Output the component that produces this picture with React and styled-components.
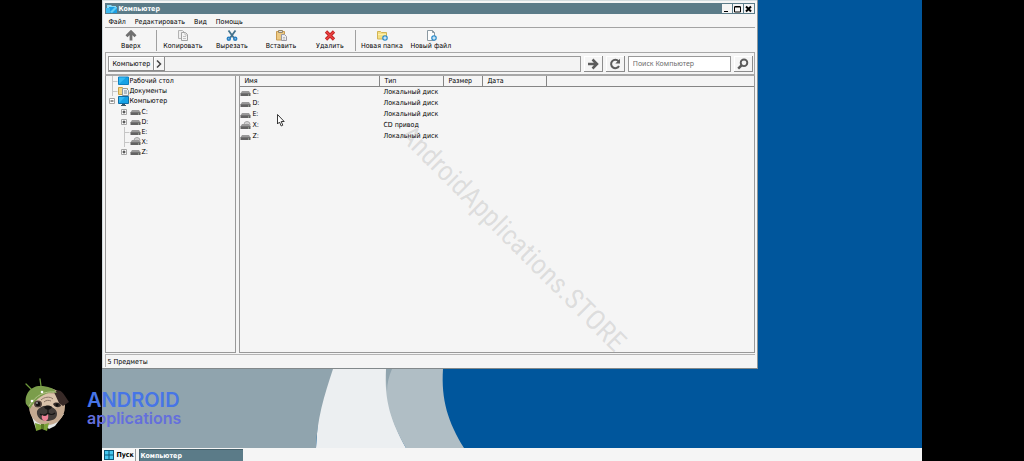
import React from 'react';
import styled, { createGlobalStyle, css } from 'styled-components';

const GlobalStyle = createGlobalStyle`
  * { box-sizing: border-box; }
  body {
    margin: 0;
    background: #000;
    color: #000;
    font-family: "DejaVu Sans Condensed", "DejaVu Sans", sans-serif;
    font-size: 7px;
    line-height: 10px;
  }
  button, input { font: inherit; color: inherit; margin: 0; padding: 0; border-radius: 0; }
  ul { list-style: none; margin: 0; padding: 0; }
  svg { display: block; flex: none; }
`;

const Screen = styled.div`
  position: relative;
  min-height: 100vh;
  padding: 0 10%;
  display: flex;
  overflow: hidden;
`;

const Desktop = styled.div`
  flex: 1;
  min-width: 0;
  display: flex;
  flex-direction: column;
  background: #00569c;
`;

const Workspace = styled.main`
  position: relative;
  flex: 1;
  display: flex;
  padding: 0 20% 79px 0;
`;

const Wallpaper = styled.svg`
  position: absolute;
  inset: 0;
  width: 100%;
  height: 100%;
`;

const Window = styled.section`
  position: relative;
  flex: 1;
  min-width: 0;
  display: flex;
  flex-direction: column;
  padding: 3px 2px 1px 3px;
  background: #f5f5f5;
  border-right: 1px solid #8b979c;
  border-bottom: 1px solid #83898b;
  box-shadow: inset 1px 1px 0 #d3dcdf;
`;

const TitleBar = styled.header`
  display: flex;
  align-items: center;
  gap: 1px;
  height: 11px;
  padding: 0 1px;
  background: #5b7b88;
  color: #fff;
`;

const Title = styled.h1`
  flex: 1;
  margin: 0;
  font-size: 7px;
  line-height: 10px;
  font-weight: 700;
`;

const Captions = styled.div`
  display: flex;
  gap: 1px;
`;

const CaptionButton = styled.button`
  display: grid;
  place-items: center;
  width: 10px;
  height: 9px;
  border: 0;
  background: #f5f5f5;
  color: #000;
`;

const MenuBar = styled.nav`
  display: flex;
  gap: 9px;
  height: 14px;
  padding: 3px 3px 0;
  border-bottom: 1px solid #a3a3a3;
`;

const MenuItem = styled.button`
  border: 0;
  background: none;
  line-height: 10px;
`;

const Toolbar = styled.div`
  display: flex;
  height: 24px;
  padding: 2px 0 1px 1px;
`;

const Tool = styled.button`
  display: flex;
  flex-direction: column;
  align-items: center;
  width: 49px;
  border: 0;
  background: none;
  white-space: nowrap;
`;

const ToolDivider = styled.div`
  width: 2px;
  margin-left: 1px;
  border-left: 1px solid #a0a0a0;
`;

const AddressBar = styled.div`
  display: flex;
  gap: 3px;
  height: 24px;
  padding: 3px 1px 2px 2px;
  border: solid #a8a8a8;
  border-width: 1px 1px 2px;
`;

const Path = styled.div`
  flex: 1;
  display: flex;
  border: 1px solid #999;
  background: #f3f3f3;
`;

const raised = css`
  border: solid #8c8c8c;
  border-width: 0 1px 1px 0;
  background: #f5f5f5;
  box-shadow: inset 1px 1px 0 #fff;
`;

const Crumb = styled.button`
  ${raised}
  display: grid;
  place-items: center;
  padding: 0 ${p => (p.$arrow ? 2 : 3)}px;
`;

const SquareButton = styled.button`
  ${raised}
  display: grid;
  place-items: center;
  width: 19px;
  color: #5c5c5c;
`;

const SearchForm = styled.form`
  display: flex;
  gap: 3px;
`;

const SearchInput = styled.input`
  width: 103px;
  padding: 0 4px;
  border: 1px solid #999;
  background: #fff;
  font-family: "Noto Sans", sans-serif;
  &::placeholder { color: #6d6d6d; opacity: 1; }
`;

const Panes = styled.div`
  flex: 1;
  display: flex;
  gap: 3px;
`;

const Pane = styled.div`
  border: 1px solid #999;
  border-top: 0;
  background: #f5f5f5;
  ${p => (p.$side ? 'width: 131px;' : 'flex: 1;')}
`;

const TreeList = styled.ul`
  ${p => (p.$nested ? 'margin: 1px 0 0 12px;' : 'padding: 0 0 0 3px;')}
`;

const Node = styled.div`
  display: flex;
  align-items: center;
  height: 10px;
  white-space: nowrap;
`;

const Twig = styled.span`
  display: flex;
  width: 9px;
`;

const Listing = styled.table`
  width: 100%;
  border-collapse: separate;
  border-spacing: 0;
  table-layout: fixed;
`;

const HeadCell = styled.th`
  width: ${p => (p.$width ? `${p.$width}px` : 'auto')};
  height: 11px;
  padding: 0 4px;
  border: solid #858585;
  border-width: 0 ${p => (p.$width ? 1 : 0)}px 1px 0;
  font-weight: 400;
  line-height: 10px;
  text-align: left;
`;

const Cell = styled.td`
  height: 11px;
  padding: 0 0 0 ${p => (p.$first ? 0 : 3)}px;
  line-height: 11px;
  white-space: nowrap;
`;

const FileName = styled.span`
  display: flex;
  align-items: center;
  gap: 1px;
`;

const StatusBar = styled.footer`
  height: 13px;
  margin-top: 1px;
  padding: 2px 1px 0;
  border-top: 1px solid #b4b4b4;
  border-left: 1px solid #b4b4b4;
`;

const Taskbar = styled.footer`
  position: relative;
  display: flex;
  gap: 3px;
  height: 13px;
  padding: 1px 2px 0;
  background: #f5f5f5;
  font-weight: 700;
`;

const StartButton = styled.button`
  display: flex;
  align-items: center;
  gap: 2px;
  width: 32px;
  border: 0;
  border-right: 1px solid #999;
  background: #f8f8f8;
`;

const Task = styled.button`
  width: 104px;
  padding: 0;
  border: solid #45606b;
  border-width: 1px 0 0 1px;
  background: #5b7b88;
  color: #fff;
  text-align: left;
`;

const Watermark = styled.div`
  position: absolute;
  left: 416px;
  top: 119px;
  transform: rotate(45deg);
  transform-origin: 0 0;
  color: rgba(120, 120, 120, 0.2);
  font: 400 28px/32px "Roboto Condensed", "Liberation Sans Narrow", sans-serif;
  white-space: nowrap;
  pointer-events: none;
`;

const Pointer = styled.svg`
  position: absolute;
  left: 277px;
  top: 114px;
  pointer-events: none;
`;

const Brand = styled.div`
  position: absolute;
  left: 22px;
  bottom: 28px;
  display: flex;
  align-items: center;
  gap: 17px;
  pointer-events: none;
`;

const BrandText = styled.div`
  display: flex;
  flex-direction: column;
  padding-top: 5px;
  font-family: Inter, sans-serif;
  font-weight: 600;
`;

const BrandName = styled.span`
  color: #4775e6;
  font-size: 20px;
  line-height: 20px;
`;

const BrandSub = styled.span`
  color: #646fdc;
  font-size: 16px;
  line-height: 16px;
`;

const Monitor = () => (
  <svg width="11" height="10" viewBox="0 0 11 10">
    <path d="M.5.5h10v7H.5z" fill="#16a2e6" stroke="#0d6ca5" />
    <path d="M1 7 7 1H1z" fill="#35baf3" />
    <path d="M4 8h3v1h1v1H3V9h1z" fill="#3c5868" />
  </svg>
);

const DesktopIcon = () => (
  <svg width="11" height="10" viewBox="0 0 11 10">
    <path d="M.5 1h10v7.500H.5z" fill="#16a2e6" stroke="#0d7fc0" />
    <path d="M1 8 8 1.500H1z" fill="#35baf3" />
  </svg>
);

const ComputerTitleIcon = () => (
  <svg width="11" height="10" viewBox="0 0 11 10">
    <path d="M1 1h4l1 1h4v4H1z" fill="#8adcf8" />
    <path d="M3 3h8v6H3z" fill="#1c9ee2" />
    <path d="M0 4h4v5H0z" fill="#3cb8ee" />
    <path d="M4 8 9 3h2v1L6 9z" fill="#63cdf5" />
  </svg>
);

const Documents = () => (
  <svg width="11" height="10" viewBox="0 0 11 10">
    <path d="M.5 1.500h4l1 1h4v6h-9z" fill="#f2d684" stroke="#c8a34a" />
    <path d="M4.500 2.500h4l2 2v5h-6z" fill="#eef1f3" stroke="#8e999f" />
    <path d="M6 5h3M6 7h3" stroke="#758995" />
  </svg>
);

const Drive = ({ cd }) => (
  <svg width="11" height="10" viewBox="0 0 11 10">
    {cd && <circle cx="7" cy="3.500" r="3" fill="#d6d6d6" stroke="#a5a5a5" />}
    {cd && <circle cx="7" cy="3.500" r="1" fill="#f8f8f8" stroke="#aaa" strokeWidth=".5" />}
    <path d="M2 3h7l1.500 2.500H.5z" fill="#999" />
    <path d="M.5 5h10v3H.5z" fill="#626262" />
    <path d="M1 5.500h9" stroke="#7d7d7d" strokeWidth=".7" />
    <path d="M8 7h1" stroke="#b4c6b1" />
  </svg>
);

const Expander = ({ open }) => (
  <svg width="6" height="7" viewBox="0 0 6 7">
    <path d="M.5.5h5v5h-5z" fill="#fff" stroke="#a4a4a4" />
    <path d={open ? 'M1.500 3h3' : 'M1.500 3h3M3 1.500v3'} stroke="#222" />
  </svg>
);

const Dash = () => (
  <svg width="9" height="10" viewBox="0 0 9 10">
    <path d="M3.500 0v10M3.500 5.500h5" stroke="#c6c6c6" fill="none" />
  </svg>
);

const UpIcon = () => (
  <svg width="12" height="11" viewBox="0 0 12 11">
    <path d="M6 10.500V3M1.500 6.200 6 1.700l4.500 4.500" fill="none" stroke="#707070" strokeWidth="2.800" />
  </svg>
);
const CopyIcon = () => (
  <svg width="12" height="11" viewBox="0 0 12 11">
    <path d="M1.500.5h4l2 2v6h-6z" fill="#eee" stroke="#b3b3b3" />
    <path d="M4.500 2.500h4l2 2v6h-6z" fill="#f4f4f4" stroke="#a3a3a3" />
    <path d="M8 3v2h2M6 6.500h3M6 8.500h3" stroke="#b5b5b5" fill="none" strokeWidth=".8" />
  </svg>
);
const CutIcon = () => (
  <svg width="12" height="11" viewBox="0 0 12 11">
    <path d="M2.500.5 8 8M9.500.5 4 8" stroke="#45738c" strokeWidth="1.800" />
    <circle cx="2.800" cy="8.700" r="1.400" fill="none" stroke="#2980c2" strokeWidth="1.700" />
    <circle cx="9.200" cy="8.700" r="1.400" fill="none" stroke="#2980c2" strokeWidth="1.700" />
  </svg>
);
const PasteIcon = () => (
  <svg width="12" height="11" viewBox="0 0 12 11">
    <path d="M1.500 1.500h8v8.500h-8z" fill="#edc982" stroke="#c99b51" />
    <path d="M3.500.5h4v2h-4z" fill="#ddd" stroke="#918468" />
    <path d="M6.500 4.500h3l2 2v4h-5z" fill="#ececef" stroke="#9a9aa4" />
    <path d="M8 7.500h2M8 9h2" stroke="#aaa" strokeWidth=".7" />
  </svg>
);
const DeleteIcon = () => (
  <svg width="12" height="11" viewBox="0 0 12 11">
    <path d="m2 1.500 8 8M10 1.500l-8 8" stroke="#b81d1d" strokeWidth="3.200" />
    <path d="m2.200 1.700 7.600 7.600M9.800 1.700 2.200 9.300" stroke="#e84141" strokeWidth="1.800" />
  </svg>
);
const Plus = () => (
  <>
    <circle cx="9" cy="8" r="2.800" fill="#2c8dcc" />
    <path d="M9 6.300v3.400M7.300 8h3.400" stroke="#fff" />
  </>
);
const NewFolderIcon = () => (
  <svg width="12" height="11" viewBox="0 0 12 11">
    <path d="M1.500 1.500h3l1 1h5v6.500h-9z" fill="#f4df85" stroke="#d2b454" />
    <path d="M2 4.500h8" stroke="#fff0ad" />
    <Plus />
  </svg>
);
const NewFileIcon = () => (
  <svg width="12" height="11" viewBox="0 0 12 11">
    <path d="M2.500.5h5l2 2v8h-7z" fill="#fdfdfd" stroke="#8c9aa3" />
    <path d="M7.500.5v2h2" fill="none" stroke="#8c9aa3" />
    <Plus />
  </svg>
);

const GoIcon = () => (
  <svg width="12" height="12" viewBox="0 0 12 12">
    <path d="M1 6h9M5.500 1.500 10 6l-4.500 4.500" fill="none" stroke="currentColor" strokeWidth="2.500" />
  </svg>
);
const ReloadIcon = () => (
  <svg width="12" height="12" viewBox="0 0 12 12">
    <path d="M9.500 3.200A4.200 4.200 0 1 0 10 8" fill="none" stroke="currentColor" strokeWidth="2" />
    <path d="M11 .8v4.700H6.300z" fill="currentColor" />
  </svg>
);
const SearchIcon = () => (
  <svg width="12" height="12" viewBox="0 0 12 12">
    <circle cx="7" cy="4.800" r="3.300" fill="none" stroke="currentColor" strokeWidth="1.900" />
    <path d="M4.500 7.300 1.200 10.700" stroke="currentColor" strokeWidth="2.500" />
  </svg>
);
const StartIcon = () => (
  <svg width="10" height="10" viewBox="0 0 10 10">
    <path d="M0 0h10v10H0z" fill="#0c5878" />
    <path d="M1 1h3.500v3.500H1zM5.500 1H9v3.500H5.500zM1 5.500h3.500V9H1zM5.500 5.500H9V9H5.500z" fill="#45c7ef" />
  </svg>
);

const captions = [
  ['Свернуть', 'M2 6.500h4', 1],
  ['Развернуть', 'M1.500 2h6v5h-6zM1.500 1.500h6', 1],
  ['Закрыть', 'm2 1.500 5 5M7 1.500l-5 5', 2],
];

const PugLogo = () => (
  <svg width="48" height="56" viewBox="0 0 48 56">
    <path d="m10 13-6-6M19 9 18 2" stroke="#6d983b" strokeWidth="1.300" strokeLinecap="round" />
    <path d="m8 34 6 18 8-4 5 4 6-3 9-12z" fill="#e4e7e7" />
    <path d="M7 29c0-10 6-18 17-18 12 0 19 7 19 18 0 12-8 19-18 19S7 41 7 29z" fill="#c5aa91" />
    <path d="M12 22c5-6 19-8 25-2l2 9-13 5-16-5z" fill="#dac3ab" />
    <path d="M32 15c5-3 8-1 11 4l4 6-6 4-4-3z" fill="#382a27" />
    <path d="M4 27C2 17 9 9 18 9c8 0 14 2 17 7-10-2-20 4-27 16z" fill="#7b9d4b" />
    <path d="M7 29c7-11 15-15 27-14" stroke="#b5c58b" strokeWidth="1" fill="none" />
    <circle cx="10" cy="24" r="1.300" fill="#fff" />
    <circle cx="20" cy="15" r="1.300" fill="#fff" />
    <path d="M15 34c2-4 7-6 11-5 6 1 9 4 9 8 0 5-5 7-10 7-6 0-11-4-10-10z" fill="#423c39" />
    <path d="M22 30c2-2 6-2 8 0-1 3-6 4-8 0z" fill="#171515" />
    <path d="M26 32v4M18 37c3 2 6 1 8-1 2 2 5 2 7 0" fill="none" stroke="#171515" strokeWidth="1.200" />
    <ellipse cx="16" cy="27" rx="4" ry="3.600" fill="#51423b" />
    <circle cx="16" cy="27" r="2.300" fill="#151212" />
    <circle cx="15" cy="26" r=".8" fill="#fff" />
    <path d="M31 27c3-3 8-1 8 2-3 2-6 2-8-2z" fill="#352c29" />
    <circle cx="35" cy="28" r="1.400" fill="#0e0e0e" />
    <path d="M19 23c3-3 9-4 12-1M22 25c2-2 5-2 7-1" fill="none" stroke="#8b7768" />
    <path d="M20 38c2 2 5 1 6-1 1 5-1 7-3 7s-4-3-3-6z" fill="#ef8297" />
    <path d="m13 46 7 2 7-2-2 8-5-2-6 2z" fill="#7aa138" />
    <path d="M19 47h3v5h-3z" fill="#577725" />
  </svg>
);

const tools = [
  ['Вверх', UpIcon],
  null,
  ['Копировать', CopyIcon],
  ['Вырезать', CutIcon],
  ['Вставить', PasteIcon],
  ['Удалить', DeleteIcon],
  null,
  ['Новая папка', NewFolderIcon],
  ['Новый файл', NewFileIcon],
];

const drives = [
  { name: 'C:', type: 'Локальный диск', branch: true },
  { name: 'D:', type: 'Локальный диск', branch: true },
  { name: 'E:', type: 'Локальный диск' },
  { name: 'X:', type: 'CD привод', cd: true },
  { name: 'Z:', type: 'Локальный диск', branch: true },
];

const columns = [['Имя', 140], ['Тип', 64], ['Размер', 39], ['Дата', 64], ['', 0]];

export default function App() {
  return (
    <Screen>
      <GlobalStyle />
      <Desktop>
        <Workspace>
          <Wallpaper viewBox="0 0 820 448" preserveAspectRatio="xMinYMax slice" aria-hidden="true">
            <path d="M220 360h65v9c-2 31 5 53 19 79h-90z" fill="#eceff1" />
            <path d="M284 360h57v9c-2 31 5 53 21 79h-58c-15-26-22-48-20-79z" fill="#b0bec5" />
            <path d="M284 369h6c-3 7-5 14-5 22-1-8-1-14-1-22z" fill="#90a4ae" />
            <path d="M0 0h240l-9 369c-9 27-16 50-17 79H0z" fill="#90a4ae" />
          </Wallpaper>
          <Window>
            <TitleBar>
              <ComputerTitleIcon />
              <Title>Компьютер</Title>
              <Captions>
                {captions.map(([label, d, weight]) => (
                  <CaptionButton key={label} type="button" aria-label={label}>
                    <svg width="9" height="8" viewBox="0 0 9 8">
                      <path d={d} fill="none" stroke="currentColor" strokeWidth={weight} />
                    </svg>
                  </CaptionButton>
                ))}
              </Captions>
            </TitleBar>
            <MenuBar>
              {['Файл', 'Редактировать', 'Вид', 'Помощь'].map(item => (
                <MenuItem key={item} type="button">{item}</MenuItem>
              ))}
            </MenuBar>
            <Toolbar>
              {tools.map((tool, i) => {
                if (!tool) return <ToolDivider key={i} />;
                const [label, Icon] = tool;
                return (
                  <Tool key={label} type="button">
                    <Icon />
                    {label}
                  </Tool>
                );
              })}
            </Toolbar>
            <AddressBar>
              <Path>
                <Crumb type="button">Компьютер</Crumb>
                <Crumb type="button" $arrow aria-label="Развернуть путь">
                  <svg width="6" height="8" viewBox="0 0 6 8">
                    <path d="m1 .5 3.500 3.500L1 7.500" fill="none" stroke="#444" strokeWidth="1.500" />
                  </svg>
                </Crumb>
              </Path>
              <SquareButton type="button" aria-label="Перейти"><GoIcon /></SquareButton>
              <SquareButton type="button" aria-label="Обновить"><ReloadIcon /></SquareButton>
              <SearchForm onSubmit={e => e.preventDefault()}>
                <SearchInput aria-label="Поиск" placeholder="Поиск Компьютер" />
                <SquareButton type="submit" aria-label="Найти"><SearchIcon /></SquareButton>
              </SearchForm>
            </AddressBar>
            <Panes>
              <Pane $side>
                <TreeList>
                  <li><Node><Twig><Dash /></Twig><DesktopIcon />Рабочий стол</Node></li>
                  <li><Node><Twig><Dash /></Twig><Documents />Документы</Node></li>
                  <li>
                    <Node><Twig><Expander open /></Twig><Monitor />Компьютер</Node>
                    <TreeList $nested>
                      {drives.map(d => (
                        <li key={d.name}>
                          <Node>
                            <Twig>{d.branch ? <Expander /> : <Dash />}</Twig>
                            <Drive cd={d.cd} />
                            {d.name}
                          </Node>
                        </li>
                      ))}
                    </TreeList>
                  </li>
                </TreeList>
              </Pane>
              <Pane>
                <Listing>
                  <thead>
                    <tr>
                      {columns.map(([label, width]) => (
                        <HeadCell key={label} $width={width}>{label}</HeadCell>
                      ))}
                    </tr>
                  </thead>
                  <tbody>
                    {drives.map(d => (
                      <tr key={d.name}>
                        <Cell $first><FileName><Drive cd={d.cd} />{d.name}</FileName></Cell>
                        <Cell>{d.type}</Cell>
                        <Cell />
                        <Cell />
                        <Cell />
                      </tr>
                    ))}
                  </tbody>
                </Listing>
              </Pane>
            </Panes>
            <StatusBar>5 Предметы</StatusBar>
          </Window>
        </Workspace>
        <Taskbar>
          <StartButton type="button"><StartIcon />Пуск</StartButton>
          <Task type="button">Компьютер</Task>
        </Taskbar>
      </Desktop>
      <Watermark>AndroidApplications.STORE</Watermark>
      <Pointer width="8" height="13" viewBox="0 0 8 13" aria-hidden="true">
        <path d="M.5.5v9.500l2-2 1.700 4 1.600-.8L4.200 7.500h3z" fill="#fff" stroke="#222" strokeWidth=".9" />
      </Pointer>
      <Brand>
        <PugLogo />
        <BrandText>
          <BrandName>ANDROID</BrandName>
          <BrandSub>applications</BrandSub>
        </BrandText>
      </Brand>
    </Screen>
  );
}
